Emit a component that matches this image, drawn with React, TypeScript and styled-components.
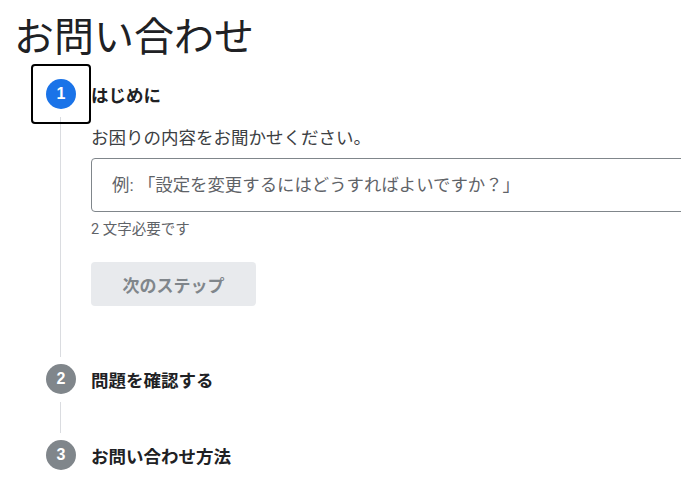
import React from "react";
import styled, { createGlobalStyle } from "styled-components";

const GlobalStyle = createGlobalStyle`
  html, body {
    margin: 0;
    padding: 0;
    background: #ffffff;
    overflow: hidden;
  }
  body {
    font-family: Roboto, "Noto Sans CJK JP", "Noto Sans", sans-serif;
    color: #202124;
  }
`;

const Page = styled.main`
  padding: 10px 0 0 14px;
`;

const Title = styled.h1`
  margin: 0;
  font-family: "Noto Sans CJK JP", sans-serif;
  font-size: 40px;
  line-height: 48px;
  font-weight: 400;
  color: #202124;
`;

const Stepper = styled.ol`
  list-style: none;
  margin: 21px 0 0 32px;
  padding: 0;
`;

const StepItem = styled.li`
  display: grid;
  grid-template-columns: 30px 1fr;
  column-gap: 15px;
`;

const Rail = styled.div`
  display: flex;
  flex-direction: column;
`;

const Indicator = styled.div<{ $active?: boolean; $focused?: boolean }>`
  position: relative;
  width: 30px;
  height: 30px;
  border-radius: 50%;
  background: ${(p) => (p.$active ? "#1a73e8" : "#80868b")};
  color: #ffffff;
  display: flex;
  align-items: center;
  justify-content: center;
  font-family: "Liberation Sans", Arial, sans-serif;
  font-weight: 700;
  font-size: 16px;
  flex: none;

  ${(p) =>
    p.$focused &&
    `
    &::after {
      content: "";
      position: absolute;
      inset: -15px;
      border: 2px solid #000000;
      border-radius: 4px;
    }
  `}
`;

const Connector = styled.div`
  width: 1px;
  flex: 1;
  margin: 8px 0 7px 14px;
  background: #dadce0;
`;

const Body = styled.div<{ $pad: number }>`
  display: flex;
  flex-direction: column;
  align-items: flex-start;
  padding-bottom: ${(p) => p.$pad}px;
  min-width: 0;
`;

const StepTitle = styled.div`
  height: 30px;
  display: flex;
  align-items: center;
  font-family: "Noto Sans CJK JP", sans-serif;
  font-size: 17.5px;
  font-weight: 700;
  color: #202124;
`;

const Label = styled.label`
  margin-top: 18px;
  font-family: "Noto Sans CJK JP", sans-serif;
  font-size: 17.5px;
  line-height: 20px;
  color: #3c4043;
`;

const TextInput = styled.input`
  margin-top: 11px;
  box-sizing: border-box;
  width: 620px;
  height: 54px;
  border: 1px solid #80868b;
  border-radius: 4px;
  padding: 0 20px;
  font-family: Roboto, "Noto Sans CJK JP", sans-serif;
  font-size: 17.4px;
  color: #202124;
  outline: none;
  background: #ffffff;

  &::placeholder {
    color: #5f6368;
  }
`;

const Helper = styled.div`
  margin-top: 9px;
  font-family: Roboto, "Noto Sans CJK JP", sans-serif;
  font-size: 14.5px;
  line-height: 18px;
  color: #5f6368;
`;

const NextButton = styled.button`
  margin-top: 23px;
  width: 165px;
  height: 44px;
  border: none;
  border-radius: 4px;
  background: #e8eaed;
  color: #80868b;
  font-family: "Noto Sans CJK JP", sans-serif;
  font-size: 17px;
  font-weight: 700;
  cursor: default;
`;

type StepProps = {
  num: number;
  title: string;
  active?: boolean;
  focused?: boolean;
  last?: boolean;
  pad: number;
  children?: React.ReactNode;
};

function Step({ num, title, active, focused, last, pad, children }: StepProps) {
  return (
    <StepItem>
      <Rail>
        <Indicator $active={active} $focused={focused}>
          {num}
        </Indicator>
        {!last && <Connector />}
      </Rail>
      <Body $pad={pad}>
        <StepTitle>{title}</StepTitle>
        {children}
      </Body>
    </StepItem>
  );
}

export default function App() {
  return (
    <>
      <GlobalStyle />
      <Page>
        <Title>お問い合わせ</Title>
        <Stepper>
          <Step num={1} title="はじめに" active focused pad={58}>
            <Label htmlFor="q">お困りの内容をお聞かせください。</Label>
            <TextInput
              id="q"
              placeholder="例: 「設定を変更するにはどうすればよいですか？」"
            />
            <Helper>2 文字必要です</Helper>
            <NextButton disabled>次のステップ</NextButton>
          </Step>
          <Step num={2} title="問題を確認する" pad={46} />
          <Step num={3} title="お問い合わせ方法" last pad={0} />
        </Stepper>
      </Page>
    </>
  );
}
